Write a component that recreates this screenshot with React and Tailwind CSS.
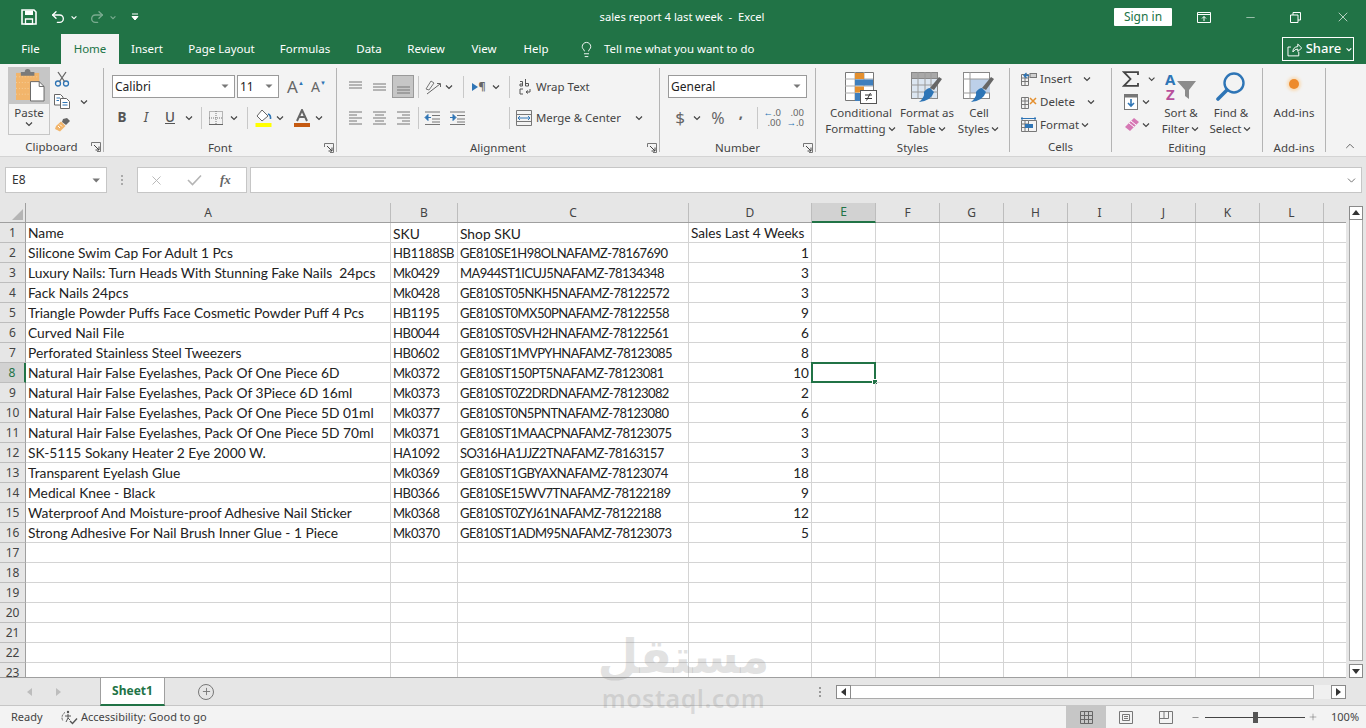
import { ChevronDown, ChevronUp, Minus, Plus, X, Lightbulb, Undo2, Redo2 } from "lucide-react";

const rows = [
  ["Name", "SKU", "Shop SKU", "Sales Last 4 Weeks"],
  ["Silicone Swim Cap For Adult 1 Pcs", "HB1188SB", "GE810SE1H98OLNAFAMZ-78167690", "1"],
  ["Luxury Nails: Turn Heads With Stunning Fake Nails  24pcs", "Mk0429", "MA944ST1ICUJ5NAFAMZ-78134348", "3"],
  ["Fack Nails 24pcs", "Mk0428", "GE810ST05NKH5NAFAMZ-78122572", "3"],
  ["Triangle Powder Puffs Face Cosmetic Powder Puff 4 Pcs", "HB1195", "GE810ST0MX50PNAFAMZ-78122558", "9"],
  ["Curved Nail File", "HB0044", "GE810ST0SVH2HNAFAMZ-78122561", "6"],
  ["Perforated Stainless Steel Tweezers", "HB0602", "GE810ST1MVPYHNAFAMZ-78123085", "8"],
  ["Natural Hair False Eyelashes, Pack Of One Piece 6D", "Mk0372", "GE810ST150PT5NAFAMZ-78123081", "10"],
  ["Natural Hair False Eyelashes, Pack Of 3Piece 6D 16ml", "Mk0373", "GE810ST0Z2DRDNAFAMZ-78123082", "2"],
  ["Natural Hair False Eyelashes, Pack Of One Piece 5D 01ml", "Mk0377", "GE810ST0N5PNTNAFAMZ-78123080", "6"],
  ["Natural Hair False Eyelashes, Pack Of One Piece 5D 70ml", "Mk0371", "GE810ST1MAACPNAFAMZ-78123075", "3"],
  ["SK-5115 Sokany Heater 2 Eye 2000 W.", "HA1092", "SO316HA1JJZ2TNAFAMZ-78163157", "3"],
  ["Transparent Eyelash Glue", "Mk0369", "GE810ST1GBYAXNAFAMZ-78123074", "18"],
  ["Medical Knee - Black", "HB0366", "GE810SE15WV7TNAFAMZ-78122189", "9"],
  ["Waterproof And Moisture-proof Adhesive Nail Sticker", "Mk0368", "GE810ST0ZYJ61NAFAMZ-78122188", "12"],
  ["Strong Adhesive For Nail Brush Inner Glue - 1 Piece", "Mk0370", "GE810ST1ADM95NAFAMZ-78123073", "5"],
  ["", "", "", ""],
  ["", "", "", ""],
  ["", "", "", ""],
  ["", "", "", ""],
  ["", "", "", ""],
  ["", "", "", ""],
  ["", "", "", ""],
];

const gridCols = "grid grid-cols-[26px_365px_67px_231px_123px_64px_64px_64px_64px_64px_64px_64px_64px_22px]";
const colLetters = ["A", "B", "C", "D", "E", "F", "G", "H", "I", "J", "K", "L"];

function Chev({ className = "" }) {
  return (
    <svg width="10" height="6" viewBox="0 0 10 6" className={className}>
      <path d="M2 1.5 L5 4.5 L8 1.5" fill="none" stroke="#444" strokeWidth="1.2" />
    </svg>
  );
}

function Sep() {
  return <div className="h-[22px] w-px bg-[#c8c8c8]" />;
}

function Launcher() {
  return (
    <svg width="10" height="10" viewBox="0 0 10 10">
      <path d="M0.5 4V0.5H9.5V9.5H6" fill="none" stroke="#777" />
      <path d="M3 3L8 8M8 4.5V8H4.5" fill="none" stroke="#444" />
    </svg>
  );
}

function Group({ width, label, launcher, children }) {
  return (
    <div className={`${width} my-[4px] h-[84px] shrink-0 border-r border-[#b4b4b4]`}>
      <div className="h-[70px]">{children}</div>
      <div className="grid h-[20px] grid-cols-[1fr_auto_1fr] items-center text-[11.5px] leading-[14px] text-[#444]">
        <span />
        <span>{label}</span>
        <span className="flex h-[14px] items-center justify-end pr-[2px]">{launcher && <Launcher />}</span>
      </div>
    </div>
  );
}

function Lines({ kind }) {
  const sets = {
    top: ["M1 3H14", "M1 6H14", "M1 9H14"],
    mid: ["M1 5H14", "M1 8H14", "M1 11H14"],
    bot: ["M1 8H14", "M1 11H14", "M1 14H14"],
    left: ["M1 2H14", "M1 5H9", "M1 8H14", "M1 11H9", "M1 14H14"],
    center: ["M1 2H14", "M3 5H12", "M1 8H14", "M3 11H12", "M1 14H14"],
    right: ["M1 2H14", "M6 5H14", "M1 8H14", "M6 11H14", "M1 14H14"],
  };
  return (
    <svg width="15" height="16" viewBox="0 0 15 16">
      {sets[kind].map((d) => (
        <path key={d} d={d} stroke="#777" strokeWidth="1" />
      ))}
    </svg>
  );
}

function Indent({ flip }) {
  return (
    <svg width="17" height="14" viewBox="0 0 17 14">
      <path d="M1 1H16M8 4.5H16M8 8H16M8 11H16M1 13.5H16" stroke="#777" />
      {flip ? (
        <path d="M1 6.5H6M4 3.5L7 6.5L4 9.5Z" stroke="#2f75b5" fill="#2f75b5" />
      ) : (
        <path d="M7 6.5H2M4 3.5L1 6.5L4 9.5Z" stroke="#2f75b5" fill="#2f75b5" />
      )}
    </svg>
  );
}

function PasteIcon() {
  return (
    <svg width="29" height="33" viewBox="0 0 30 34">
      <rect x="0" y="4" width="24" height="28" fill="#f2b56b" />
      <path d="M0 8H24M0 14H24M0 20H24M0 26H24" stroke="#f7cf9c" strokeDasharray="1 2" />
      <path d="M5 5V3H9Q9 0 12 0Q15 0 15 3H19V5V7H5Z" fill="#7a7a7a" />
      <path d="M15 13H24L29 18V33H15Z" fill="#fff" stroke="#666" />
      <path d="M24 13V18H29" fill="none" stroke="#666" />
    </svg>
  );
}

function Scissors() {
  return (
    <svg width="16" height="16" viewBox="0 0 16 16" fill="none">
      <circle cx="4" cy="12.5" r="2.5" stroke="#2f75b5" strokeWidth="1.3" />
      <circle cx="12" cy="12.5" r="2.5" stroke="#2f75b5" strokeWidth="1.3" />
      <path d="M5.5 10.5L12 1M10.5 10.5L4 1" stroke="#666" strokeWidth="1.3" />
    </svg>
  );
}

function CopyIcon() {
  return (
    <svg width="16" height="15" viewBox="0 0 16 15" fill="#fff">
      <path d="M0.5 0.5H6.5L9 3V11H0.5Z" stroke="#666" />
      <path d="M6.5 4.5H12.5L15.5 7.5V14.5H6.5Z" stroke="#666" />
      <path d="M2.5 4H6M2.5 6.5H5M8.5 8.5H13.5M8.5 11H13.5" stroke="#2f75b5" />
    </svg>
  );
}

function BrushIcon() {
  return (
    <svg width="16" height="14" viewBox="0 0 16 14">
      <path d="M9 1L13 0L16 3L12 7L8 4Z" fill="#666" />
      <path d="M7 3.5L11.5 8L6 13.5L1 11L2 8Z" fill="#f2b56b" />
      <path d="M4 8L6 10M6 6.5L8 8.5" stroke="#fff" />
    </svg>
  );
}

function CondIcon() {
  return (
    <svg width="32" height="32" viewBox="0 0 32 32">
      <path d="M0.5 0.5H28.5V28.5H0.5Z" fill="#fff" stroke="#777" />
      <path d="M10 0V28M19 0V14M0 7H28M0 14H28M0 21H14" stroke="#aaa" />
      <rect x="10" y="1" width="9" height="6" fill="#e48f2d" />
      <rect x="10" y="7.5" width="18" height="6" fill="#3f7fbd" />
      <rect x="10" y="14.5" width="9" height="6" fill="#e48f2d" />
      <rect x="10" y="21" width="5" height="8" fill="#3f7fbd" />
      <rect x="15.5" y="18.5" width="16" height="13" fill="#fff" stroke="#555" />
      <path d="M20 23H27M20 26.5H27M25.5 21L21.5 28.5" stroke="#333" />
    </svg>
  );
}

function TableIcon() {
  return (
    <svg width="32" height="32" viewBox="0 0 32 32">
      <rect x="0.5" y="0.5" width="26" height="26" fill="#dce6f1" stroke="#888" />
      <rect x="0.5" y="0.5" width="26" height="6" fill="#a8a8a8" stroke="#888" />
      <path d="M7 0V27M14 0V27M20 0V27M0 13H27M0 20H27" stroke="#9a9a9a" />
      <path d="M31 7L23 18L19 16L28 5Z" fill="#666" />
      <path d="M19 16L23 20Q20 29 8 30Q14 25 13 20Q16 16 19 16Z" fill="#2e75b6" />
    </svg>
  );
}

function CellStyleIcon() {
  return (
    <svg width="32" height="32" viewBox="0 0 32 32">
      <rect x="0.5" y="0.5" width="26" height="26" fill="#fff" stroke="#888" />
      <rect x="7" y="7" width="20" height="14" fill="#bdd0e9" />
      <path d="M7 0V27M0 7H27M0 21H27" stroke="#999" />
      <path d="M31 7L23 18L19 16L28 5Z" fill="#666" />
      <path d="M19 16L23 20Q20 29 8 30Q14 25 13 20Q16 16 19 16Z" fill="#2e75b6" />
    </svg>
  );
}

function CellOpIcon({ kind }) {
  return (
    <svg width="16" height="16" viewBox="0 0 16 16" fill="none">
      <path d="M0.5 3.5H7.5V14.5H0.5ZM0.5 7H7.5M0.5 10.5H7.5M4 3.5V14.5" stroke="#777" />
      {kind === "insert" && (
        <>
          <rect x="9" y="2.5" width="6.5" height="4" fill="#cfcfcf" stroke="#777" />
          <path d="M8 4.5H3M5.5 2L3 4.5L5.5 7" stroke="#2f75b5" strokeWidth="1.3" />
        </>
      )}
      {kind === "delete" && <path d="M9 4L15 10M15 4L9 10" stroke="#e48f2d" strokeWidth="1.5" />}
      {kind === "format" && (
        <>
          <path d="M0 1.5H15M1 0V3M14 0V3" stroke="#2f75b5" />
          <rect x="4" y="7" width="8" height="4" fill="#2f75b5" />
          <path d="M7.5 3.5H15.5V14.5H7.5" stroke="#777" />
        </>
      )}
    </svg>
  );
}

function SortIcon() {
  return (
    <svg width="32" height="30" viewBox="0 0 32 30">
      <text x="0" y="13" fontFamily="Noto Sans, sans-serif" fontSize="15" fontWeight="700" fill="#2e75b6">A</text>
      <text x="1" y="28" fontFamily="Noto Sans, sans-serif" fontSize="15" fontWeight="700" fill="#b8509c">Z</text>
      <path d="M12 9H31L24 18V27L20 24V18Z" fill="#8c8c8c" />
    </svg>
  );
}

function FindIcon() {
  return (
    <svg width="30" height="30" viewBox="0 0 30 30" fill="none">
      <circle cx="18" cy="11" r="9.5" stroke="#2e75b6" strokeWidth="2.4" />
      <path d="M11 18L2 27" stroke="#2e75b6" strokeWidth="3.6" strokeLinecap="round" />
    </svg>
  );
}

function Titlebar() {
  return (
    <div className="flex h-[34px] items-center bg-[#217346] text-white">
      <div className="ml-[21px] flex w-[16px] justify-center">
        <svg width="16" height="16" viewBox="0 0 16 16">
          <path d="M1 1H13L15 3V15H1Z" fill="none" stroke="#fff" strokeWidth="1.6" />
          <path d="M4 1.5H12V6H4Z" fill="#fff" />
          <path d="M4.5 10H11.5V15H4.5Z" fill="none" stroke="#fff" strokeWidth="1.3" />
        </svg>
      </div>
      <Undo2 className="ml-[13px]" size={16} strokeWidth={2} />
      <svg width="8" height="5" viewBox="0 0 10 6" className="ml-[4px]"><path d="M2 1.5L5 4.5L8 1.5" fill="none" stroke="#fff" strokeWidth="1.4" /></svg>
      <Redo2 className="ml-[11px] opacity-40" size={16} strokeWidth={2} />
      <svg width="8" height="5" viewBox="0 0 10 6" className="ml-[4px] opacity-40"><path d="M2 1.5L5 4.5L8 1.5" fill="none" stroke="#fff" strokeWidth="1.4" /></svg>
      <svg width="8" height="8" viewBox="0 0 8 8" className="ml-[14px]"><path d="M1 1H7M1 3.5H7L4 7Z" fill="#fff" stroke="#fff" /></svg>
      <div className="ml-[458px] w-[170px] whitespace-pre text-center text-[11.2px]">sales report 4 last week  -  Excel</div>
      <div className="ml-[347px] flex h-[18px] w-[58px] items-center justify-center rounded-[1px] bg-white text-[12px] text-[#217346]">Sign in</div>
      <svg width="14" height="11" viewBox="0 0 14 11" className="ml-[25px]" fill="none">
        <path d="M0.5 0.5H13.5V10.5H0.5ZM0.5 2.5H13.5" stroke="#fff" />
        <path d="M7 9V4.5M5 6.5L7 4.5L9 6.5" stroke="#fff" />
      </svg>
      <Minus className="ml-[33px]" size={13} strokeWidth={1} />
      <svg width="11" height="11" viewBox="0 0 11 11" className="ml-[33px]" fill="none">
        <path d="M0.5 3H8V10.5H0.5Z M3 3V0.5H10.5V8H8" stroke="#fff" />
      </svg>
      <X className="ml-[34px]" size={16} strokeWidth={1} />
    </div>
  );
}

function Tabs() {
  const tabs = [
    ["File", "w-[61px]"],
    ["Home", "w-[58px]"],
    ["Insert", "w-[56px]"],
    ["Page Layout", "w-[93px]"],
    ["Formulas", "w-[74px]"],
    ["Data", "w-[54px]"],
    ["Review", "w-[60px]"],
    ["View", "w-[56px]"],
    ["Help", "w-[48px]"],
  ];
  return (
    <div className="flex h-[30px] bg-[#217346] text-[11.5px] text-white">
      {tabs.map(([name, w]) =>
        name === "Home" ? (
          <div key={name} className={`${w} flex shrink-0 items-center justify-center bg-[#f3f3f3] text-[#217346]`}>{name}</div>
        ) : (
          <div key={name} className={`${w} flex shrink-0 items-center justify-center`}>{name}</div>
        )
      )}
      <div className="ml-[18px] flex w-[195px] shrink-0 items-center">
        <Lightbulb size={17} strokeWidth={1.3} />
        <span className="ml-[9px] whitespace-nowrap text-[11.4px]">Tell me what you want to do</span>
      </div>
      <div className="ml-[509px] mt-[3px] flex h-[24px] w-[72px] shrink-0 items-center border border-white pl-[4px]">
        <svg width="16" height="15" viewBox="0 0 16 15" fill="none">
          <path d="M4 5H1V14H12V10M6 10Q6 5 11 4.5V2L15 6L11 9.5V7Q8 7 6 10Z" stroke="#fff" />
        </svg>
        <span className="ml-[3px] text-[13px] font-medium">Share</span>
        <svg width="8" height="5" viewBox="0 0 10 6" className="ml-[4px]"><path d="M2 1.5L5 4.5L8 1.5" fill="none" stroke="#fff" strokeWidth="1.4" /></svg>
      </div>
    </div>
  );
}

function Select({ className, value }) {
  return (
    <div className={`${className} flex h-[23px] items-center justify-between border border-[#9a9a9a] bg-white px-[2px] text-[12px] text-[#222]`}>
      <span>{value}</span>
      <svg width="9" height="5" viewBox="0 0 9 5" className="mr-[2px]"><path d="M0.5 0.5H7.5L4 4Z" fill="#777" /></svg>
    </div>
  );
}

function Ribbon() {
  return (
    <div className="flex h-[93px] border-b border-[#d4d4d4] bg-[#f3f3f3] text-[#444]">
      <Group width="w-[104px]" label="Clipboard" launcher>
        <div className="mt-[-1px] flex">
          <div className="ml-[8px] w-[42px]">
            <div className="flex h-[36px] items-center justify-end bg-[#c6c6c6] pr-[5px]">
              <PasteIcon />
            </div>
            <div className="flex h-[32px] flex-col items-center border border-[#c6c6c6] pt-[1px] text-[11.5px] leading-[16px]">
              Paste
              <Chev />
            </div>
          </div>
          <div className="ml-[3px]">
            <div className="flex h-[23px] items-center pl-[1px]"><Scissors /></div>
            <div className="flex h-[23px] items-center pl-[1px]"><CopyIcon /><Chev className="ml-[9px]" /></div>
            <div className="flex h-[23px] items-center pl-[1px]"><BrushIcon /></div>
          </div>
        </div>
      </Group>

      <Group width="w-[233px]" label="Font" launcher>
        <div className="pt-[7px]">
          <div className="flex items-center">
            <Select className="ml-[8px] w-[123px]" value="Calibri" />
            <Select className="ml-[2px] w-[42px]" value="11" />
            <div className="ml-[8px] flex w-[17px] items-end text-[17px] leading-none text-[#666]">A<span className="mb-[9px] text-[6px] text-[#2f75b5]">▲</span></div>
            <div className="ml-[7px] flex w-[17px] items-end text-[14px] leading-none text-[#666]">A<span className="mb-[8px] text-[6px] text-[#2f75b5]">▼</span></div>
          </div>
          <div className="mt-[8px] flex h-[23px] items-center">
            <div className="ml-[6px] w-[24px] text-center text-[13.5px] font-bold text-[#555]">B</div>
            <div className="w-[24px] text-center text-[13.5px] italic text-[#555]">I</div>
            <div className="w-[24px] text-center text-[13.5px] font-medium text-[#555] underline">U</div>
            <Chev className="ml-[2px]" />
            <div className="ml-[7px]"><Sep /></div>
            <div className="ml-[4px] flex w-[20px] justify-center">
              <svg width="14" height="14" viewBox="0 0 14 14" fill="none">
                <path d="M0.5 0.5H13.5V13.5H0.5ZM7 0V14M0 7H14" stroke="#777" strokeDasharray="1 1" />
                <path d="M0 13.5H14" stroke="#666" />
              </svg>
            </div>
            <Chev className="ml-[3px]" />
            <div className="ml-[8px]"><Sep /></div>
            <div className="ml-[5px] flex w-[20px] justify-center">
              <svg width="17" height="18" viewBox="0 0 17 18" fill="none">
                <path d="M7 1L13 7L7 12L2 7Z" fill="#fff" stroke="#666" />
                <path d="M13 5Q16 6 15.5 10" stroke="#2f75b5" strokeWidth="1.6" />
                <rect x="0.5" y="14" width="16" height="4" fill="#ffff00" />
              </svg>
            </div>
            <Chev className="ml-[2px]" />
            <div className="ml-[7px] flex w-[20px] justify-center">
              <svg width="16" height="18" viewBox="0 0 16 18">
                <path d="M3 12L8 1L13 12M5 8H11" fill="none" stroke="#666" strokeWidth="2" />
                <rect x="0" y="14" width="16" height="4" fill="#c55a11" />
              </svg>
            </div>
            <Chev className="ml-[2px]" />
          </div>
        </div>
      </Group>

      <Group width="w-[323px]" label="Alignment" launcher>
        <div className="pt-[7px]">
          <div className="flex h-[23px] items-center text-[11.5px]">
            <div className="ml-[6px] flex w-[24px] justify-center"><Lines kind="top" /></div>
            <div className="flex w-[24px] justify-center"><Lines kind="mid" /></div>
            <div className="mx-[1px] flex h-[23px] w-[22px] items-center justify-center border border-[#9a9a9a] bg-[#c6c6c6]"><Lines kind="bot" /></div>
            <div className="ml-[3px]"><Sep /></div>
            <div className="ml-[4px] flex w-[20px] justify-center">
              <svg width="18" height="16" viewBox="0 0 18 16" fill="none">
                <path d="M3 15L16 5M13 4.5H16.5V8" stroke="#666" />
                <path d="M2 10L7 2M5 11L10 4M2 10L5 11M7 2L10 4" stroke="#777" />
              </svg>
            </div>
            <Chev className="ml-[1px]" />
            <div className="ml-[9px]"><Sep /></div>
            <div className="ml-[5px] flex w-[20px] items-center justify-center text-[11px]">
              <svg width="6" height="8" viewBox="0 0 6 8"><path d="M0 0L6 4L0 8Z" fill="#2f75b5" /></svg>
              <span className="font-bold text-[#666]">¶</span>
            </div>
            <Chev className="ml-[2px]" />
            <div className="ml-[8px]"><Sep /></div>
            <div className="ml-[6px] flex w-[18px] justify-center">
              <svg width="13" height="16" viewBox="0 0 13 16" fill="none">
                <path d="M1 2.5H3.5V7H1V5H3.5M6.5 0V7M6.5 4.5H9.5V7H6.5M4 10H1V15H4M11 10V13H7M9 11.5L7 13L9 14.5" stroke="#555" />
              </svg>
            </div>
            <span className="ml-[2px] whitespace-nowrap">Wrap Text</span>
          </div>
          <div className="mt-[8px] flex h-[23px] items-center text-[11.5px]">
            <div className="ml-[6px] flex w-[24px] justify-center"><Lines kind="left" /></div>
            <div className="flex w-[24px] justify-center"><Lines kind="center" /></div>
            <div className="flex w-[24px] justify-center"><Lines kind="right" /></div>
            <div className="ml-[3px]"><Sep /></div>
            <div className="ml-[2px] flex w-[22px] justify-center"><Indent /></div>
            <div className="ml-[3px] flex w-[22px] justify-center"><Indent flip /></div>
            <div className="ml-[41px]"><Sep /></div>
            <div className="ml-[5px] flex w-[18px] justify-center">
              <svg width="16" height="16" viewBox="0 0 16 16" fill="none">
                <path d="M0.5 0.5H15.5V15.5H0.5ZM0.5 4.5H15.5M0.5 11.5H15.5" stroke="#777" />
                <path d="M2 8H14M4 6L2 8L4 10M12 6L14 8L12 10" stroke="#2f75b5" />
              </svg>
            </div>
            <span className="ml-[3px] w-[90px] whitespace-nowrap text-[11.4px]">Merge &amp; Center</span>
            <Chev className="ml-[8px]" />
          </div>
        </div>
      </Group>

      <Group width="w-[156px]" label="Number" launcher>
        <div className="pt-[7px]">
          <Select className="ml-[8px] w-[139px]" value="General" />
          <div className="mt-[8px] flex h-[23px] items-center text-[#666]">
            <div className="ml-[10px] w-[20px] text-center text-[17px] leading-none">$</div>
            <Chev className="ml-[2px]" />
            <div className="ml-[6px] w-[20px] text-center text-[16px] leading-none">%</div>
            <div className="ml-[6px] w-[14px] pb-[10px] text-center text-[15px] font-bold leading-none">,</div>
            <div className="ml-[9px]"><Sep /></div>
            <div className="ml-[3px] flex w-[22px] flex-col items-end pr-[2px] text-[9.5px] leading-[10px]">
              <span><span className="text-[#2f75b5]">←</span>.0</span>
              <span>.00</span>
            </div>
            <div className="ml-[1px] flex w-[22px] flex-col items-end pr-[2px] text-[9.5px] leading-[10px]">
              <span>.00</span>
              <span><span className="text-[#2f75b5]">→</span>.0</span>
            </div>
          </div>
        </div>
      </Group>

      <Group width="w-[194px]" label="Styles">
        <div className="flex pt-[4px] text-center text-[11.5px] leading-[16px]">
          <div className="ml-[6px] w-[78px]">
            <div className="flex h-[33px] justify-center"><CondIcon /></div>
            <div>Conditional</div>
            <div className="flex items-center justify-center whitespace-nowrap">Formatting<Chev className="ml-[1px]" /></div>
          </div>
          <div className="w-[54px]">
            <div className="flex h-[33px] justify-center"><TableIcon /></div>
            <div className="whitespace-nowrap">Format as</div>
            <div className="flex items-center justify-center">Table<Chev className="ml-[1px]" /></div>
          </div>
          <div className="w-[50px]">
            <div className="flex h-[33px] justify-center"><CellStyleIcon /></div>
            <div>Cell</div>
            <div className="flex items-center justify-center">Styles<Chev className="ml-[1px]" /></div>
          </div>
        </div>
      </Group>

      <Group width="w-[102px]" label="Cells">
        <div className="mt-[-1px] text-[11.5px]">
          <div className="flex h-[23px] items-center pl-[11px]">
            <CellOpIcon kind="insert" />
            <span className="ml-[3px] w-[42px]">Insert</span>
            <Chev />
          </div>
          <div className="flex h-[23px] items-center pl-[11px]">
            <CellOpIcon kind="delete" />
            <span className="ml-[3px] w-[46px]">Delete</span>
            <Chev />
          </div>
          <div className="flex h-[23px] items-center pl-[11px]">
            <CellOpIcon kind="format" />
            <span className="ml-[3px] w-[40px] whitespace-nowrap">Format</span>
            <Chev />
          </div>
        </div>
      </Group>

      <Group width="w-[151px]" label="Editing">
        <div className="flex">
          <div className="mt-[-1px] w-[44px] shrink-0">
            <div className="flex h-[23px] items-center pl-[9px]">
              <div className="flex w-[20px] justify-center">
                <svg width="17" height="16" viewBox="0 0 17 16" fill="none">
                  <path d="M16 4V1.2H2L8.5 8L2 14.8H16V12" stroke="#444" strokeWidth="1.8" />
                </svg>
              </div>
              <Chev className="ml-[7px]" />
            </div>
            <div className="flex h-[23px] items-center pl-[9px]">
              <div className="flex w-[20px] justify-center">
                <svg width="14" height="16" viewBox="0 0 14 16" fill="none">
                  <rect x="0.5" y="0.5" width="13" height="15" fill="#fff" stroke="#777" />
                  <rect x="0.5" y="0.5" width="13" height="3" fill="#777" />
                  <path d="M7 5V12M4 9L7 12L10 9" stroke="#2f75b5" strokeWidth="1.6" />
                </svg>
              </div>
              <Chev />
            </div>
            <div className="flex h-[23px] items-center pl-[9px]">
              <div className="flex w-[20px] justify-center">
                <svg width="15" height="13" viewBox="0 0 15 13">
                  <path d="M10 0L15 4L6 13L1 9Z" fill="#d678b4" />
                  <path d="M5 5L10 9M7 3L12 7" stroke="#fff" />
                </svg>
              </div>
              <Chev />
            </div>
          </div>
          <div className="w-[50px] pt-[4px] text-center text-[11.5px] leading-[16px]">
            <div className="flex h-[33px] justify-center"><SortIcon /></div>
            <div className="whitespace-nowrap">Sort &amp;</div>
            <div className="flex items-center justify-center">Filter<Chev className="ml-[1px]" /></div>
          </div>
          <div className="w-[50px] pt-[4px] text-center text-[11.5px] leading-[16px]">
            <div className="flex h-[33px] justify-center"><FindIcon /></div>
            <div className="whitespace-nowrap">Find &amp;</div>
            <div className="flex items-center justify-center">Select<Chev className="ml-[1px]" /></div>
          </div>
        </div>
      </Group>

      <Group width="w-[63px]" label="Add-ins">
        <div className="pt-[4px] text-center text-[11.5px] leading-[16px]">
          <div className="flex h-[33px] items-start justify-center pt-[7px]">
            <div className="h-[10px] w-[10px] rounded-full bg-[#ed8b2d] shadow-[0_0_3px_2px_#f8dcb8]" />
          </div>
          Add-ins
        </div>
      </Group>

      <div className="flex flex-1 items-end justify-end pb-[3px] pr-[9px]">
        <ChevronUp size={14} strokeWidth={1.5} color="#555" />
      </div>
    </div>
  );
}

function FormulaBar() {
  return (
    <div className="flex h-[46px] items-start bg-[#e6e6e6] pl-[5px] pt-[10px] text-[#666]">
      <div className="flex h-[26px] w-[102px] items-center justify-between border border-[#c6c6c6] bg-white pl-[6px] pr-[5px] text-[12px] text-[#333]">
        E8
        <svg width="9" height="5" viewBox="0 0 9 5"><path d="M0.5 0.5H8L4.2 4.5Z" fill="#777" /></svg>
      </div>
      <div className="ml-[14px] mt-[8px] flex flex-col gap-[2px]">
        <div className="h-[2px] w-[2px] bg-[#aaa]" />
        <div className="h-[2px] w-[2px] bg-[#aaa]" />
        <div className="h-[2px] w-[2px] bg-[#aaa]" />
      </div>
      <div className="ml-[14px] flex h-[26px] w-[110px] items-center border border-[#c6c6c6] bg-white">
        <X className="ml-[11px]" size={15} strokeWidth={1.5} color="#b5b5b5" />
        <svg width="15" height="12" viewBox="0 0 15 12" className="ml-[23px]" fill="none"><path d="M1 6L5.5 10.5L14 1.5" stroke="#b5b5b5" strokeWidth="1.6" /></svg>
        <span className="ml-[18px] font-['Liberation_Serif',serif] text-[13px] font-bold italic text-[#666]">fx</span>
      </div>
      <div className="ml-[3px] flex h-[26px] w-[1112px] items-center justify-end border border-[#c6c6c6] bg-white pr-[3px]">
        <ChevronDown size={13} strokeWidth={1.5} color="#555" />
      </div>
    </div>
  );
}

function Sheet() {
  return (
    <div className="flex h-[475px] overflow-hidden">
      <div className="w-[1346px] shrink-0 overflow-hidden border-b border-[#9f9f9f] bg-white">
        <div className={`${gridCols} h-[20px] border-b border-[#9f9f9f] bg-[#e6e6e6] text-[12px] text-[#444]`}>
          <div className="flex items-end justify-end border-r border-[#9f9f9f] pb-[2px] pr-[2px]">
            <svg width="11" height="11" viewBox="0 0 11 11"><path d="M11 0V11H0Z" fill="#b5b5b5" /></svg>
          </div>
          {colLetters.map((c) =>
            c === "E" ? (
              <div key={c} className="-mb-px flex items-center justify-center border-b-2 border-r border-[#217346] border-r-[#bdbdbd] bg-[#d2d2d2] text-[#217346]">{c}</div>
            ) : (
              <div key={c} className="flex items-center justify-center border-r border-[#bdbdbd]">{c}</div>
            )
          )}
          <div />
        </div>
        {rows.map((r, i) => (
          <div key={i} className={`${gridCols} h-[20px] font-['Lato',sans-serif] text-[#222]`}>
            {i === 7 ? (
              <div className="flex items-center justify-center border-b border-r-2 border-[#bdbdbd] border-r-[#217346] bg-[#d2d2d2] font-['Noto_Sans',sans-serif] text-[12px] text-[#217346]">{i + 1}</div>
            ) : (
              <div className="flex items-center justify-center border-b border-r border-[#bdbdbd] border-r-[#9f9f9f] bg-[#e6e6e6] font-['Noto_Sans',sans-serif] text-[12px] text-[#444]">{i + 1}</div>
            )}
            <div className="overflow-hidden whitespace-pre border-b border-r border-[#d4d4d4] pl-[2px] text-[13.8px] leading-[19px]">{r[0]}</div>
            <div className={`overflow-hidden whitespace-pre border-b border-r border-[#d4d4d4] pl-[2px] leading-[21px] ${i === 0 ? "text-[13.8px]" : "text-[13px] tracking-[-0.35px]"}`}>{r[1]}</div>
            <div className={`overflow-hidden whitespace-pre border-b border-r border-[#d4d4d4] pl-[2px] leading-[21px] ${i === 0 ? "text-[13.8px]" : "text-[13px] tracking-[-0.55px]"}`}>{r[2]}</div>
            <div className={`overflow-hidden whitespace-pre border-b border-r border-[#d4d4d4] px-[2px] text-[13.6px] leading-[21px] ${i === 0 ? "" : "text-right"}`}>{r[3]}</div>
            {[4, 5, 6, 7, 8, 9, 10, 11].map((c) => (
              <div key={c} className="relative border-b border-r border-[#d4d4d4]">
                {i === 7 && c === 4 && (
                  <div className="absolute inset-[-1px] border-2 border-[#217346]">
                    <div className="absolute bottom-[-4px] right-[-4px] h-[6px] w-[6px] border border-white bg-[#217346]" />
                  </div>
                )}
              </div>
            ))}
            <div className="border-b border-[#d4d4d4]" />
          </div>
        ))}
      </div>
      <div className="flex w-[20px] flex-col items-center bg-[#e6e6e6] pt-[3px]">
        <div className="flex h-[14px] w-[14px] items-center justify-center border border-[#8a8a8a] bg-white">
          <svg width="8" height="5" viewBox="0 0 8 5"><path d="M0 5L4 0L8 5Z" fill="#333" /></svg>
        </div>
        <div className="h-[444px] w-[14px] border border-t-0 border-[#ababab] bg-white" />
        <div className="mt-[3px] flex h-[14px] w-[14px] items-center justify-center border border-[#8a8a8a] bg-white">
          <svg width="8" height="5" viewBox="0 0 8 5"><path d="M0 0L4 5L8 0Z" fill="#333" /></svg>
        </div>
      </div>
    </div>
  );
}

function SheetTabs() {
  return (
    <div className="flex h-[28px] items-center border-b border-[#c6c6c6] bg-[#e6e6e6]">
      <svg width="5" height="8" viewBox="0 0 5 8" className="ml-[27px]"><path d="M5 0L0 4L5 8Z" fill="#bdbdbd" /></svg>
      <svg width="5" height="8" viewBox="0 0 5 8" className="ml-[24px]"><path d="M0 0L5 4L0 8Z" fill="#bdbdbd" /></svg>
      <div className="ml-[39px] flex h-[28px] w-[65px] items-center justify-center border-x border-b-2 border-x-[#9f9f9f] border-b-[#217346] bg-white text-[12px] font-bold text-[#217346]">Sheet1</div>
      <div className="ml-[33px] flex h-[16px] w-[16px] items-center justify-center rounded-full border border-[#777]">
        <Plus size={11} strokeWidth={2} color="#777" />
      </div>
      <div className="ml-[605px] flex flex-col gap-[2px]">
        <div className="h-[2px] w-[2px] bg-[#999]" />
        <div className="h-[2px] w-[2px] bg-[#999]" />
        <div className="h-[2px] w-[2px] bg-[#999]" />
      </div>
      <div className="ml-[15px] flex h-[14px] w-[15px] items-center justify-center border border-[#8a8a8a] bg-white">
        <svg width="5" height="8" viewBox="0 0 5 8"><path d="M5 0L0 4L5 8Z" fill="#333" /></svg>
      </div>
      <div className="h-[14px] w-[463px] border border-l-0 border-[#ababab] bg-white" />
      <div className="h-[14px] w-[17px] bg-[#f0f0f0]" />
      <div className="flex h-[14px] w-[15px] items-center justify-center border border-[#8a8a8a] bg-white">
        <svg width="5" height="8" viewBox="0 0 5 8"><path d="M0 0L5 4L0 8Z" fill="#333" /></svg>
      </div>
    </div>
  );
}

function StatusBar() {
  return (
    <div className="flex h-[22px] items-center bg-[#f3f3f3] text-[11px] text-[#444]">
      <span className="ml-[11px] w-[32px]">Ready</span>
      <svg width="17" height="15" viewBox="0 0 17 15" className="ml-[18px]" fill="none">
        <path d="M4 2.5A6 6 0 0 0 2 11" stroke="#555" strokeDasharray="2 1" />
        <circle cx="7" cy="2" r="1.2" fill="#555" />
        <path d="M7 4V8M4 6H10M5 12L7 8L9 10" stroke="#555" />
        <path d="M9 11L11.5 13.5L16 8.5" stroke="#555" strokeWidth="1.4" />
      </svg>
      <span className="ml-[3px] w-[127px] whitespace-nowrap">Accessibility: Good to go</span>
      <div className="ml-[858px] flex h-[22px] w-[40px] items-center justify-center bg-[#c6c6c6]">
        <svg width="13" height="13" viewBox="0 0 13 13" fill="none"><path d="M0.5 0.5H12.5V12.5H0.5ZM4.5 0V13M8.5 0V13M0 4.5H13M0 8.5H13" stroke="#666" /></svg>
      </div>
      <div className="flex w-[40px] justify-center">
        <svg width="14" height="13" viewBox="0 0 14 13" fill="none"><path d="M0.5 0.5H13.5V12.5H0.5ZM3.5 3.5H10.5V9.5H3.5ZM5 5.5H9M5 7.5H9" stroke="#777" /></svg>
      </div>
      <div className="flex w-[40px] justify-center">
        <svg width="14" height="13" viewBox="0 0 14 13" fill="none"><path d="M0.5 0.5H13.5V12.5H0.5ZM0.5 7.5H9.5V0.5M5 0.5V7.5" stroke="#777" /></svg>
      </div>
      <Minus className="ml-[5px]" size={9} strokeWidth={1.5} color="#444" />
      <div className="ml-[5px] flex h-[22px] w-[100px] items-center">
        <div className="h-px w-[48px] bg-[#444]" />
        <div className="h-[11px] w-[5px] bg-[#555]" />
        <div className="h-px w-[47px] bg-[#444]" />
      </div>
      <Plus className="ml-[3px]" size={10} strokeWidth={1} color="#444" />
      <span className="ml-[13px]">100%</span>
    </div>
  );
}

export default function App() {
  return (
    <div className="relative h-[728px] w-[1366px] overflow-hidden bg-white font-['Noto_Sans',sans-serif]">
      <Titlebar />
      <Tabs />
      <Ribbon />
      <FormulaBar />
      <Sheet />
      <SheetTabs />
      <StatusBar />
      {/* site watermark over the sheet */}
      <div className="pointer-events-none absolute left-[596px] top-[627px] flex w-[175px] flex-col items-center font-['DejaVu_Sans',sans-serif] font-bold text-[#8c8c8c]/25">
        <span className="text-[47px] leading-[60px]" dir="rtl">مستقل</span>
        <span className="font-['Noto_Sans',sans-serif] text-[25px] font-semibold leading-[22px] tracking-[0.5px]">mostaql.com</span>
      </div>
    </div>
  );
}
